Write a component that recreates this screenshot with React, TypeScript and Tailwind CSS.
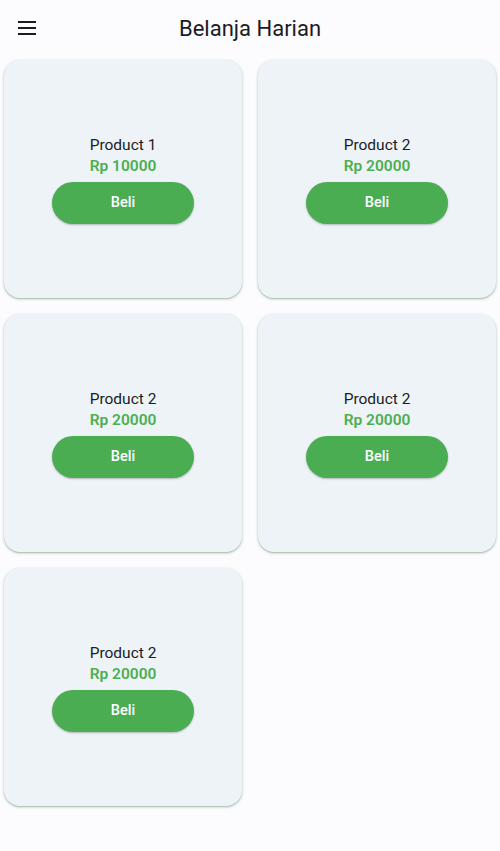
const products = [
  { name: "Product 1", price: 10000 },
  { name: "Product 2", price: 20000 },
  { name: "Product 2", price: 20000 },
  { name: "Product 2", price: 20000 },
  { name: "Product 2", price: 20000 },
];

function ProductCard({ name, price }: { name: string; price: number }) {
  return (
    <div className="flex h-[238px] flex-col items-center justify-center rounded-[16px] bg-[#eef3f7] shadow-[0_1px_3px_rgba(76,140,80,0.45),0_1px_1px_rgba(0,0,0,0.12)]">
      <div className="text-[15.5px] leading-[21px] text-[#1c1b1f]">{name}</div>
      <div className="text-[15.5px] leading-[21px] font-semibold text-[#4caf50]">Rp {price}</div>
      <button className="mt-[5px] h-[42px] w-[142px] rounded-full bg-[#4aad52] text-[14.5px] font-medium text-white shadow-[0_1px_2px_rgba(0,0,0,0.25)]">
        Beli
      </button>
    </div>
  );
}

export default function App() {
  return (
    <div className="min-h-[851px] w-[500px] bg-[#fcfcff] font-['Roboto',sans-serif]">
      <header className="relative flex h-[56px] items-center justify-center">
        <div className="absolute left-[18px] top-[21px] flex w-[18px] flex-col gap-[4px]">
          <span className="h-[2px] bg-[#1c1b1f]" />
          <span className="h-[2px] bg-[#1c1b1f]" />
          <span className="h-[2px] bg-[#1c1b1f]" />
        </div>
        <h1 className="text-[22px] text-[#1c1b1f]">Belanja Harian</h1>
      </header>
      <div className="grid grid-cols-2 gap-[16px] px-[4px] pt-[4px]">
        {products.map((p, i) => (
          <ProductCard key={i} name={p.name} price={p.price} />
        ))}
      </div>
    </div>
  );
}
